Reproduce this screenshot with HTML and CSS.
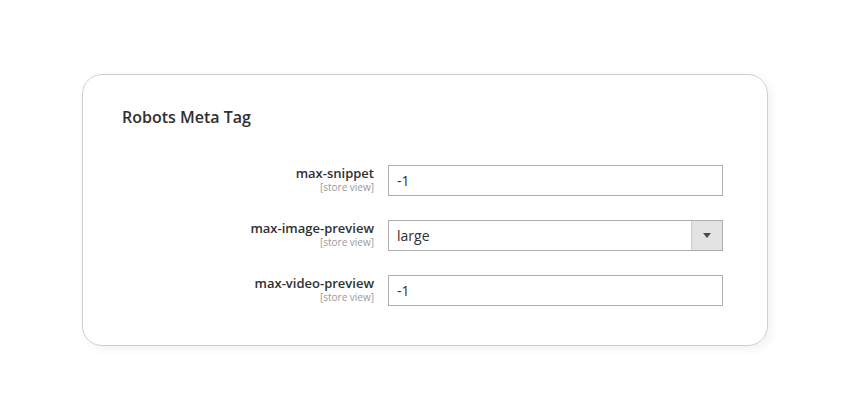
FILE: index.html
```html
<!DOCTYPE html>
<html lang="en">
<head>
    <meta charset="UTF-8">
    <meta name="viewport" content="width=device-width, initial-scale=1.0">
    <title>Robots Meta Tag</title>
    <link rel="stylesheet" href="styles.css">
</head>
<body>
    <div class="card">
        <h2 class="card-title">Robots Meta Tag</h2>
        <div class="fields">
            <div class="field">
                <label class="field-label" for="maxSnippet">
                    <span>max-snippet</span>
                    <span class="scope">[store view]</span>
                </label>
                <input class="field-input" id="maxSnippet" type="text" value="-1">
            </div>
            <div class="field">
                <label class="field-label" for="maxImage">
                    <span>max-image-preview</span>
                    <span class="scope">[store view]</span>
                </label>
                <div class="select">
                    <span class="select-value" id="maxImage">large</span>
                    <span class="select-btn"><span class="arrow"></span></span>
                </div>
            </div>
            <div class="field">
                <label class="field-label" for="maxVideo">
                    <span>max-video-preview</span>
                    <span class="scope">[store view]</span>
                </label>
                <input class="field-input" id="maxVideo" type="text" value="-1">
            </div>
        </div>
    </div>
</body>
</html>
```

FILE: styles.css
```css
html, body {
    height: 100%;
    margin: 0;
}
body {
    background-color: #ffffff;
    font-family: 'Open Sans', sans-serif;
    color: #303030;
    display: flex;
    align-items: center;
    justify-content: center;
}
.card {
    width: 686px;
    height: 272px;
    box-sizing: border-box;
    border: 1px solid #cfcfcf;
    border-radius: 20px;
    box-shadow: 3px 3px 10px rgba(0, 0, 0, 0.06);
    padding: 31px 43px 40px 39px;
}
.card-title {
    margin: 0;
    font-size: 16px;
    font-weight: 600;
    line-height: 22px;
    color: #303030;
}
.fields {
    margin-top: 37px;
    display: flex;
    flex-direction: column;
    gap: 24px;
}
.field {
    display: grid;
    grid-template-columns: 252px 335px;
    column-gap: 14px;
}
.field-label {
    display: flex;
    flex-direction: column;
    align-items: flex-end;
    text-align: right;
    font-size: 13px;
    font-weight: 600;
    line-height: 16px;
}
.field-label .scope {
    font-size: 10px;
    font-weight: 400;
    color: #999999;
    line-height: 11px;
    margin-top: 1px;
}
.field-input,
.select {
    box-sizing: border-box;
    height: 31px;
    width: 335px;
    border: 1px solid #adadad;
    font-family: 'Open Sans', sans-serif;
    font-size: 14px;
    color: #303030;
    background: #ffffff;
}
.field-input {
    padding: 0 8px;
    outline: none;
}
.select {
    display: flex;
    align-items: stretch;
}
.select-value {
    flex: 1;
    display: flex;
    align-items: center;
    padding-left: 8px;
}
.select-btn {
    width: 30px;
    border-left: 1px solid #cccccc;
    background-color: #e3e3e3;
    display: flex;
    align-items: center;
    justify-content: center;
}
.arrow {
    width: 0;
    height: 0;
    border-left: 4px solid transparent;
    border-right: 4px solid transparent;
    border-top: 5px solid #514943;
}
```
